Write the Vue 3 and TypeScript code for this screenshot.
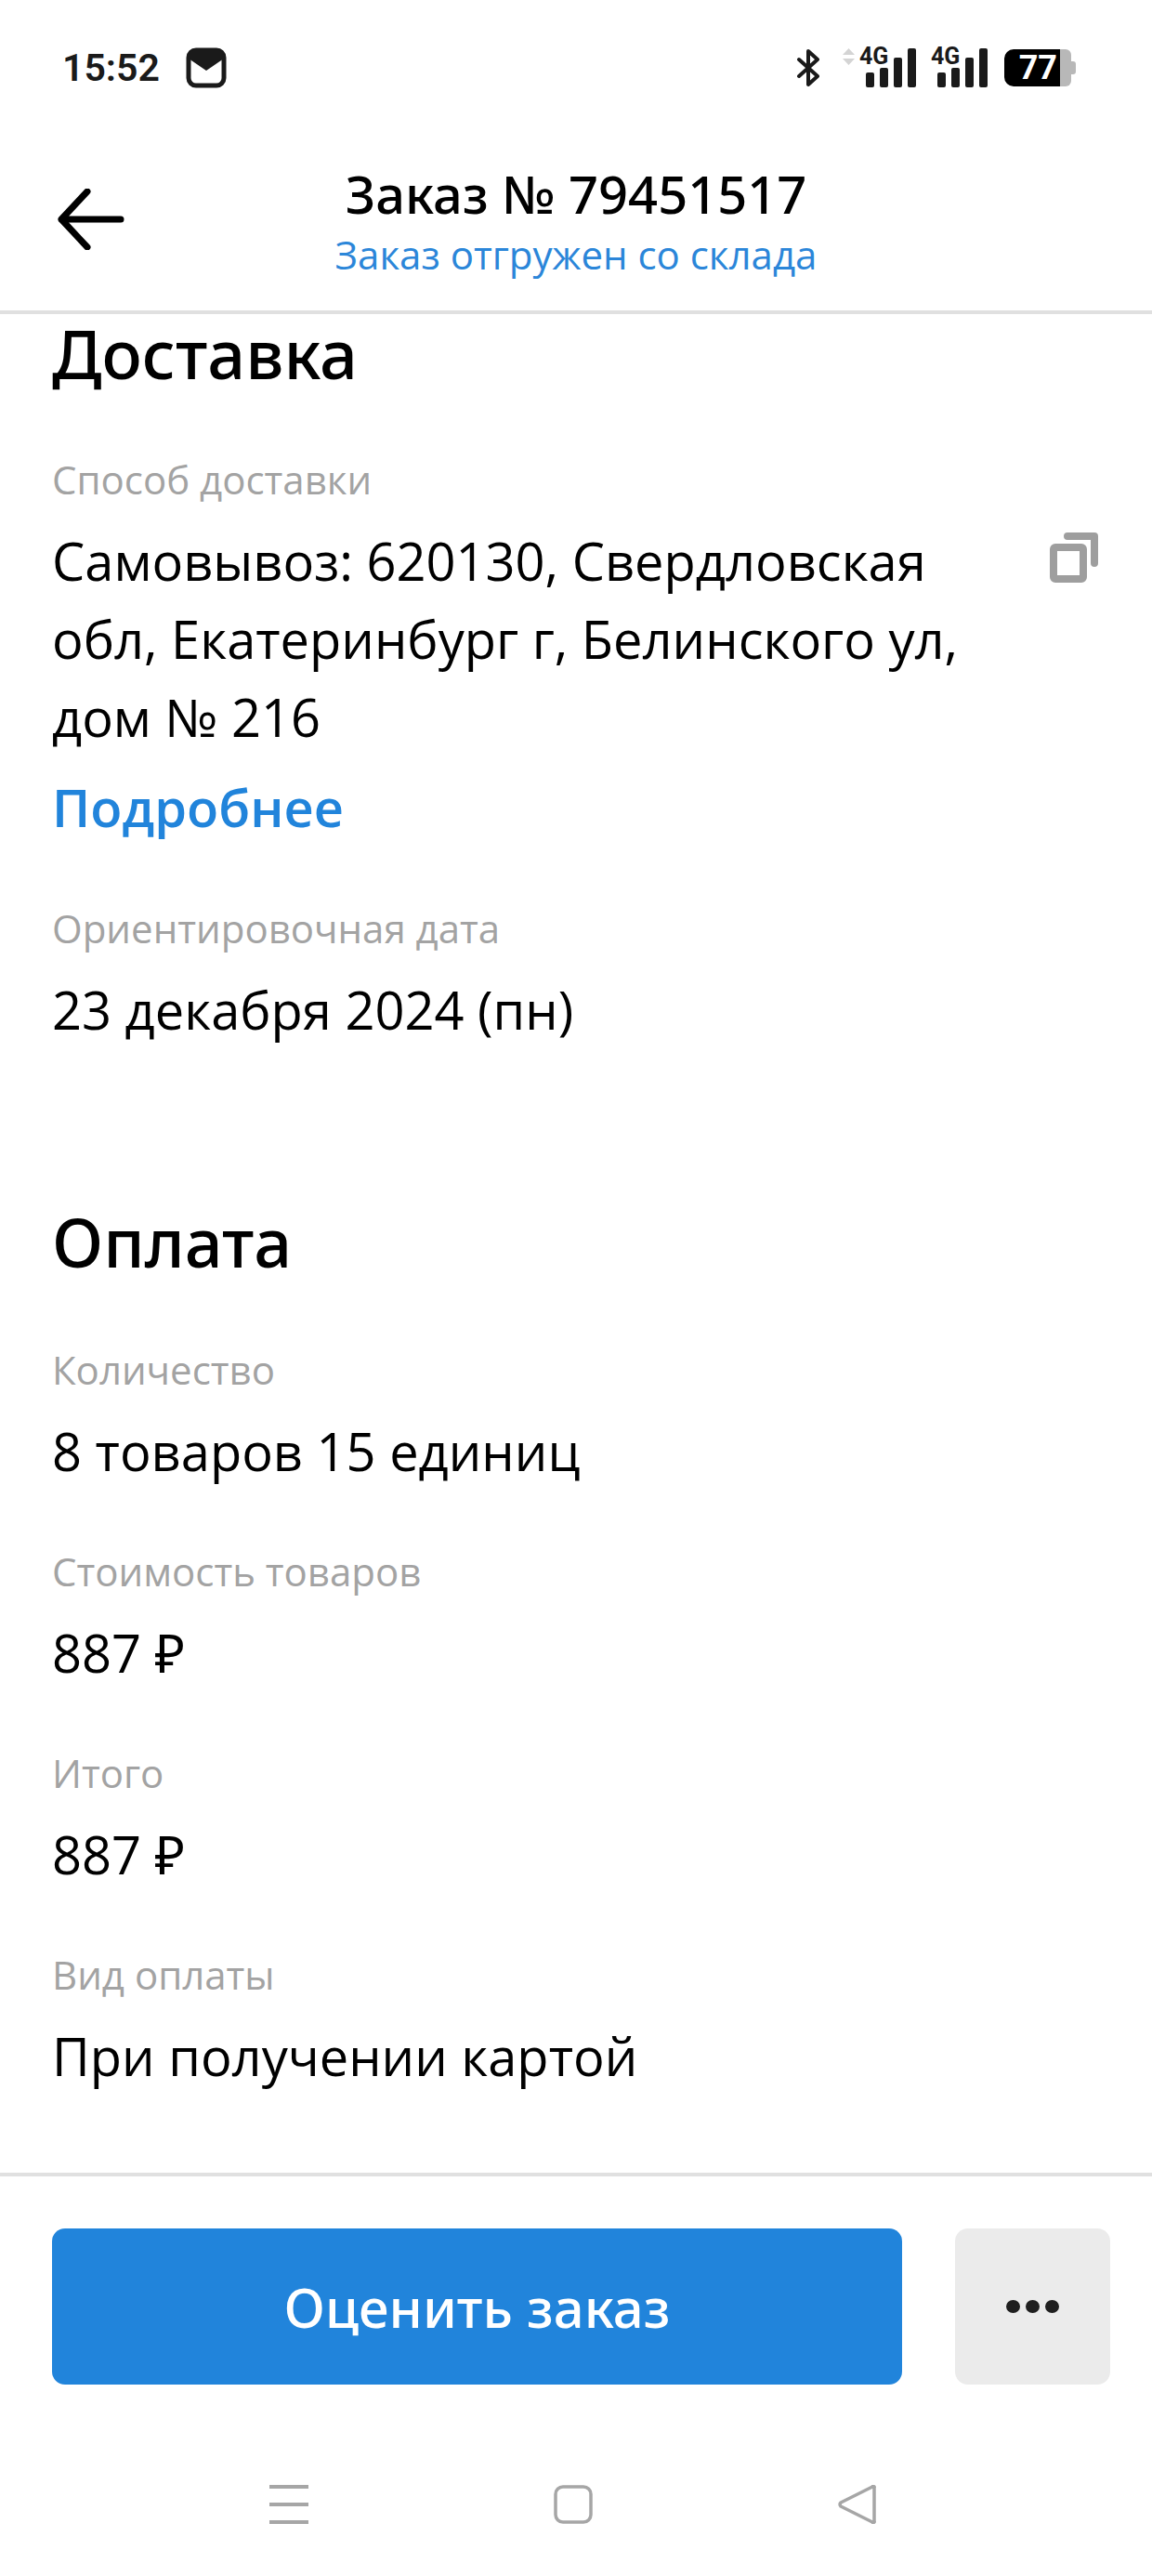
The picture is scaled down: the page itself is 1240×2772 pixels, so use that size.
<template>
  <div class="screen">
    <div class="status-bar">
      <span class="time">15:52</span>
      <svg class="mail" width="44" height="44" viewBox="0 0 44 44">
        <rect x="3" y="3" width="38" height="38" rx="8" fill="#fff" stroke="#1a1a1a" stroke-width="5" />
        <path d="M3 8a5 5 0 0 1 5-5h28a5 5 0 0 1 5 5v4L22 25 3 12z" fill="#1a1a1a" />
      </svg>
      <div class="status-right">
        <svg class="bt" width="26" height="42" viewBox="0 0 26 42">
          <path d="M2 12l20 18-10 9V3l10 9L2 30" fill="none" stroke="#1a1a1a" stroke-width="4" stroke-linecap="round" stroke-linejoin="round" />
        </svg>
        <svg class="updown" width="13" height="18" viewBox="0 0 13 18">
          <path d="M6.500 0L13 7H0zM0 11h13l-6.500 7z" fill="#d4d4d4" />
        </svg>
        <div v-for="n in 2" :key="n" class="signal" :class="{ second: n === 2 }">
          <span class="net">4G</span>
          <div class="bars">
            <i v-for="h in barHeights" :key="h" :style="{ height: h + 'px' }"></i>
          </div>
        </div>
        <div class="battery">
          <div class="charge">77</div>
          <div class="empty"></div>
          <div class="nub"></div>
        </div>
      </div>
    </div>

    <header class="top">
      <svg class="back" width="72" height="66" viewBox="0 0 72 66">
        <path d="M68 33H4M32 3L4 33l28 30" fill="none" stroke="#000" stroke-width="7" stroke-linecap="round" stroke-linejoin="round" />
      </svg>
      <div class="top-text">
        <div class="order">Заказ № 79451517</div>
        <div class="state">Заказ отгружен со склада</div>
      </div>
    </header>

    <main class="content">
      <section class="delivery">
        <h2>Доставка</h2>
        <div class="field">
          <div class="label">Способ доставки</div>
          <div class="address-row">
            <div class="value address">Самовывоз: 620130, Свердловская обл, Екатеринбург г, Белинского ул, дом № 216</div>
            <svg class="copy" width="52" height="54" viewBox="0 0 52 54">
              <rect x="4" y="16" width="32" height="34" rx="2" fill="none" stroke="#9e9e9e" stroke-width="8" />
              <path d="M19 4h29v29" fill="none" stroke="#9e9e9e" stroke-width="8" stroke-linecap="round" stroke-linejoin="round" />
            </svg>
          </div>
          <a class="more">Подробнее</a>
        </div>
        <div class="field">
          <div class="label">Ориентировочная дата</div>
          <div class="value">23 декабря 2024 (пн)</div>
        </div>
      </section>

      <section class="payment">
        <h2>Оплата</h2>
        <div v-for="row in paymentRows" :key="row.label" class="field">
          <div class="label">{{ row.label }}</div>
          <div class="value">{{ row.value }}</div>
        </div>
      </section>
    </main>

    <div class="actions">
      <button class="primary">Оценить заказ</button>
      <button class="secondary">
        <i></i><i></i><i></i>
      </button>
    </div>

    <nav class="nav-bar">
      <svg width="42" height="42" viewBox="0 0 42 42">
        <path d="M0 2h42M0 21h42M0 40h42" stroke="#a6a6a6" stroke-width="4" />
      </svg>
      <svg width="42" height="42" viewBox="0 0 42 42">
        <rect x="2" y="2" width="38" height="38" rx="8" fill="none" stroke="#a6a6a6" stroke-width="3.500" />
      </svg>
      <svg width="42" height="42" viewBox="0 0 42 42">
        <path d="M39 3v36a1 1 0 0 1-2 1L3 23a3 3 0 0 1 0-4L37 2a1 1 0 0 1 2 1z" fill="none" stroke="#a6a6a6" stroke-width="3.500" stroke-linejoin="round" />
      </svg>
    </nav>
  </div>
</template>

<script setup lang="ts">
const barHeights = [16, 21, 32, 42]

const paymentRows = [
  { label: 'Количество', value: '8 товаров 15 единиц' },
  { label: 'Стоимость товаров', value: '887 ₽' },
  { label: 'Итого', value: '887 ₽' },
  { label: 'Вид оплаты', value: 'При получении картой' }
]
</script>

<style>
html,
body {
  margin: 0;
  background: #fff;
}
</style>

<style scoped>
.screen {
  display: flex;
  flex-direction: column;
  width: 1240px;
  height: 2772px;
  overflow: hidden;
  background: #fff;
  font-family: 'Open Sans', 'Noto Sans', sans-serif;
  color: #000;
}

.status-bar {
  display: flex;
  align-items: center;
  height: 146px;
  padding: 0 82px 0 67px;
  box-sizing: border-box;
}

.time {
  font-family: Roboto, sans-serif;
  font-size: 41px;
  font-weight: 600;
  color: #1a1a1a;
}

.mail {
  margin-left: 28px;
}

.status-right {
  display: flex;
  align-items: center;
  margin-left: auto;
}

.updown {
  align-self: flex-start;
  margin: 0 5px 0 23px;
}

.signal {
  position: relative;
  width: 61px;
  height: 42px;
}

.signal.second {
  margin-left: 16px;
}

.net {
  position: absolute;
  left: 0;
  top: -5px;
  font-family: Roboto, sans-serif;
  font-size: 25px;
  font-weight: 700;
  line-height: 28px;
  color: #1a1a1a;
}

.bars {
  position: absolute;
  right: 0;
  bottom: 0;
  display: flex;
  align-items: flex-end;
  gap: 6px;
}

.bars i {
  display: block;
  width: 9px;
  border-radius: 2px;
  background: #1a1a1a;
}

.battery {
  display: flex;
  align-items: center;
  margin-left: 18px;
}

.charge {
  width: 60px;
  height: 40px;
  padding-right: 3px;
  box-sizing: border-box;
  border-radius: 10px 0 0 10px;
  background: #000;
  color: #fff;
  font-family: Roboto, sans-serif;
  font-size: 36px;
  font-weight: 700;
  line-height: 40px;
  text-align: right;
}

.empty {
  width: 12px;
  height: 40px;
  border-radius: 0 6px 6px 0;
  background: #b8b8b8;
}

.nub {
  width: 5px;
  height: 14px;
  border-radius: 0 3px 3px 0;
  background: #b8b8b8;
}

.top {
  position: relative;
  display: flex;
  justify-content: center;
  height: 192px;
  box-sizing: border-box;
  border-bottom: 4px solid #e0e0e0;
}

.back {
  position: absolute;
  left: 62px;
  top: 57px;
}

.top-text {
  text-align: center;
  padding-top: 26px;
}

.order {
  font-family: 'Noto Sans', sans-serif;
  font-size: 56px;
  font-weight: 500;
  line-height: 72px;
}

.state {
  margin-top: 5px;
  font-size: 42px;
  line-height: 50px;
  color: #2b86d9;
}

.content {
  flex: 1;
  min-height: 0;
  padding: 0 56px;
}

h2 {
  margin: 0;
  font-family: 'Noto Sans', sans-serif;
  font-size: 72px;
  font-weight: 500;
  line-height: 84px;
}

.payment {
  margin-top: 166px;
}

.field {
  margin-top: 66px;
}

.delivery .field + .field {
  margin-top: 65px;
}

.payment .field + .field {
  margin-top: 60px;
}

.payment h2 + .field {
  margin-top: 68px;
}

.label {
  font-size: 42px;
  line-height: 56px;
  color: #a3a3a3;
}

.value {
  margin-top: 17px;
  font-size: 56px;
  line-height: 84px;
}

.address-row {
  display: flex;
  justify-content: space-between;
  align-items: flex-start;
}

.address {
  width: 1000px;
}

.copy {
  margin: 29px 2px 0 0;
  flex-shrink: 0;
}

.more {
  display: block;
  font-size: 56px;
  font-weight: 600;
  line-height: 76px;
  margin-top: 17px;
  color: #2184db;
}

.actions {
  display: flex;
  gap: 57px;
  height: 320px;
  padding: 56px 45px 0 56px;
  box-sizing: border-box;
  border-top: 4px solid #e0e0e0;
}

button {
  height: 168px;
  border: 0;
  border-radius: 14px;
  padding: 0;
  font-family: 'Noto Sans', sans-serif;
}

.primary {
  width: 915px;
  background: #2184db;
  color: #fff;
  font-size: 58px;
  font-weight: 500;
}

.secondary {
  display: flex;
  align-items: center;
  justify-content: center;
  gap: 6px;
  width: 167px;
  background: #ebebeb;
}

.secondary i {
  display: block;
  width: 15px;
  height: 14px;
  border-radius: 50%;
  background: #1f1f1f;
}

.nav-bar {
  display: flex;
  justify-content: space-between;
  width: 654px;
  height: 98px;
  padding: 16px 0 0 290px;
}
</style>
